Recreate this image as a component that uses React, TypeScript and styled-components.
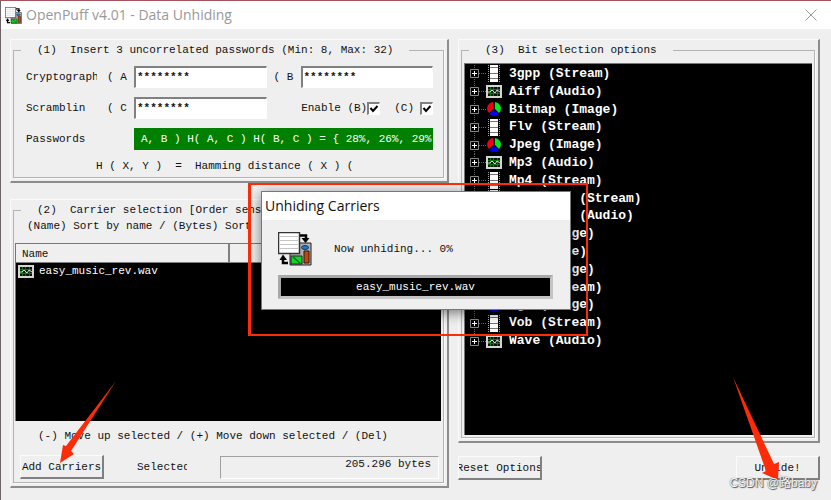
import React from "react";
import styled, { createGlobalStyle } from "styled-components";

const GlobalStyle = createGlobalStyle`
  *, *::before, *::after { box-sizing: border-box; }
  html, body, #root { height: 100%; }
  body {
    margin: 0;
    overflow: hidden;
    font: 11px/14px "Liberation Mono", monospace;
    color: #111;
    background: #efefef;
  }
  button, input { font: inherit; color: inherit; }
`;

const Window = styled.main`
  position: relative;
  display: flex;
  flex-direction: column;
  min-height: 100%;
  border-top: 1px solid #a8525f;
  border-left: 1px solid #6c6468;
  background: #efefef;
`;

const TitleBar = styled.header`
  display: flex;
  align-items: center;
  gap: 4px;
  height: 28px;
  padding: 0 14px 0 4px;
  background: #fff;
  color: #999;
`;

const Title = styled.h1`
  flex: 1;
  margin: 0;
  font: 400 14px/20px "Open Sans", sans-serif;
`;

const CloseButton = styled.button`
  display: flex;
  padding: 0;
  border: 0;
  background: none;
`;

const Body = styled.div`
  flex: 1;
  display: grid;
  grid-template-columns: 439fr 362fr;
  gap: 9px;
  padding: 10px 11px 12px 9px;
`;

const Column = styled.div`
  display: flex;
  flex-direction: column;
  gap: 16px;
  min-width: 0;
`;

const Panel = styled.section<{ $grow?: boolean }>`
  display: flex;
  flex-direction: column;
  flex: ${(p) => (p.$grow ? 1 : "none")};
  padding: 3px 3px 3px 2px;
  border: 1px solid #fafafa;
  border-right: 2px solid #8c8c8c;
  border-bottom: 2px solid #8c8c8c;
`;

const Group = styled.fieldset`
  flex: 1;
  display: flex;
  flex-direction: column;
  min-width: 0;
  margin: 0;
  padding: 0;
  border: 1px solid #b4b4b4;
  box-shadow: 1px 1px 0 #fafafa;
`;

const Legend = styled.legend`
  margin-left: 7px;
  padding: 0 16px;
  white-space: pre;
`;

const PasswordGrid = styled.div`
  display: grid;
  grid-template-columns: 71px 23px 132fr 20px 132fr;
  column-gap: 7px;
  row-gap: 9px;
  align-items: center;
  padding: 9px 10px 0 12px;
`;

const Clipped = styled.span`
  overflow: hidden;
  white-space: pre;
`;

const SlotLabel = styled.label<{ $indent?: boolean }>`
  padding-left: ${(p) => (p.$indent ? 3 : 0)}px;
  white-space: pre;
`;

const PasswordInput = styled.input`
  width: 100%;
  min-width: 0;
  height: 22px;
  padding: 0 1px 2px;
  border: 1px solid #fff;
  border-top: 2px solid #808080;
  border-left: 2px solid #808080;
  border-radius: 0;
  outline: 0;
  background: #fff;
  font-weight: 700;
`;

const EnableRow = styled.div`
  grid-column: 4 / -1;
  display: flex;
  justify-content: flex-end;
  gap: 14px;
`;

const CheckLabel = styled.label<{ $gap?: number }>`
  display: flex;
  align-items: center;
  gap: ${(p) => p.$gap || 0}px;
`;

const CheckBox = styled.input`
  appearance: none;
  width: 13px;
  height: 13px;
  margin: 0;
  border: 1px solid #fff;
  border-top: 2px solid #808080;
  border-left: 2px solid #808080;
  background: #fff;
  &:not(:checked) + svg { display: none; }
`;

const CheckWrap = styled.span`
  position: relative;
  display: flex;
  svg { position: absolute; inset: 0; pointer-events: none; }
`;

const Distance = styled.output`
  grid-column: 3 / -1;
  height: 22px;
  padding-left: 7px;
  overflow: hidden;
  white-space: pre;
  line-height: 22px;
  background: #008000;
  color: #fff;
`;

const Formula = styled.p`
  margin: 9px 0 4px 82px;
  white-space: pre;
`;

const SortHint = styled.p`
  margin: 2px 0 0 13px;
  overflow: hidden;
  white-space: pre;
`;

const CarrierBox = styled.div`
  flex: 1;
  margin: 10px 2px 0 1px;
  border-top: 1px solid #777;
  border-left: 1px solid #777;
  background: #000;
`;

const CarrierTable = styled.table`
  width: 100%;
  table-layout: fixed;
  border-collapse: collapse;
  color: #fff;
  th {
    height: 18px;
    padding: 2px 6px 0;
    border-right: 2px solid #808080;
    border-bottom: 1px solid #808080;
    background: #efefef;
    color: #111;
    font-weight: 400;
    text-align: left;
  }
  th:last-child { border-right: 0; text-align: right; }
  td { height: 18px; padding: 0 2px; }
`;

const FileName = styled.span`
  display: flex;
  align-items: center;
  gap: 5px;
`;

const MoveHint = styled.p`
  margin: 8px 0 0 24px;
  white-space: nowrap;
`;

const CarrierActions = styled.div`
  display: flex;
  align-items: center;
  margin: 12px 4px 3px 6px;
`;

const PushButton = styled.button`
  display: flex;
  align-items: center;
  justify-content: center;
  width: 84px;
  height: 24px;
  padding: 0;
  overflow: hidden;
  white-space: nowrap;
  border: 1px solid #fbfbfb;
  border-right: 2px solid #808080;
  border-bottom: 2px solid #808080;
  background: #efefef;
`;

const SelectedLabel = styled(Clipped)`
  width: 50px;
  margin: 0 33px;
`;

const ByteCount = styled.output`
  flex: 1;
  height: 23px;
  padding-right: 7px;
  border: 1px solid #fff;
  border-top-color: #a0a0a0;
  border-left-color: #a0a0a0;
  text-align: right;
`;

const TreeBox = styled.div`
  flex: 1;
  margin: 6px 2px 2px;
  border-top: 1px solid #777;
  border-left: 1px solid #777;
  background: #000;
`;

const Tree = styled.ul`
  display: grid;
  grid-template-rows: repeat(16, 1fr);
  height: 285px;
  margin: 1px 0 0;
  padding: 0 0 0 4px;
  list-style: none;
  color: #fff;
  font-size: 13px;
  font-weight: 700;
`;

const TreeRow = styled.li`
  display: flex;
  align-items: center;
  min-height: 0;
  white-space: pre;
`;

const Branch = styled.button`
  display: flex;
  padding: 0;
  border: 0;
  background: none;
`;

const Kind = styled.span`
  display: flex;
  width: 16px;
  margin-right: 7px;
`;

const Footer = styled.div`
  display: flex;
  justify-content: space-between;
  margin: -3px 0 8px;
`;

const Dialog = styled.div`
  position: absolute;
  top: 190px;
  left: calc(50% - 155px);
  width: 310px;
  border: 1px solid #777;
  background: #efefef;
  box-shadow: 0 3px 12px rgba(0, 0, 0, 0.5);
`;

const DialogTitle = styled.h2`
  margin: 0;
  padding: 4px 3px;
  background: #fff;
  color: #111;
  font: 400 14px/20px "Open Sans", sans-serif;
`;

const DialogStatus = styled.div`
  display: flex;
  align-items: center;
  gap: 22px;
  padding: 12px 16px 9px;
`;

const DialogFile = styled.div`
  margin: 0 17px 10px 16px;
  border: 3px solid #a8a8a8;
  border-right-color: #c4c4c4;
  border-bottom-color: #c4c4c4;
  padding: 2px;
  background: #000;
  color: #fff;
  text-align: center;
`;

const Highlight = styled.div`
  position: absolute;
  top: 182px;
  left: calc(50% - 168px);
  width: 340px;
  height: 153px;
  border: 2px solid #fc2b08;
  border-left-width: 3px;
  pointer-events: none;
`;

const Arrow = styled.svg<{ $x: string; $y: number }>`
  position: absolute;
  left: ${(p) => p.$x};
  top: ${(p) => p.$y}px;
  pointer-events: none;
`;

const Watermark = styled.span`
  position: absolute;
  right: 14px;
  bottom: 8px;
  color: #f8f8f8;
  font: 12px/17px "Liberation Sans", "Noto Sans CJK SC", sans-serif;
  text-shadow: 0 0 1px #444, 1px 1px 1px #555;
`;

const StreamIcon = () => (
  <svg width="16" height="17" viewBox="0 0 16 17">
    <path d="M2.5 0v17M13.5 0v17" stroke="#aaa" strokeDasharray="1 1" />
    <path d="M4 0h8v2H4zM4 3h8v5H4zM4 9h8v4H4zM4 14h8v3H4z" fill="#fff" />
    <path d="M4 2.500h8M4 8.500h8M4 13.500h8" stroke="#777" />
  </svg>
);

const AudioIcon = () => (
  <svg width="16" height="13" viewBox="0 0 16 13">
    <path d="M0 0h16v13H0z" fill="#d4d4d4" />
    <path d="M2 2h12v9H2z" fill="#001800" />
    <path d="M4.500 2v9M7.500 2v9M11.500 2v9M2 8.500h12M2 4.500h12" stroke="#087808" />
    <path d="M2 7h2l2-2 3 3 2-3 3 2" fill="none" stroke="#ddd" />
  </svg>
);

const ImageIcon = () => (
  <svg width="16" height="15" viewBox="0 0 16 15">
    <path d="M7 0v7L3 11Q1 9 1 6Q2 1 7 0" fill="#f00018" />
    <path d="M9 0v7l4 4q2-2 2-5Q14 1 9 0" fill="#00ec18" />
    <path d="M8 8l5 4q-5 4-10 0z" fill="#0000fa" />
  </svg>
);

const AppIcon = ({ size }: { size: number }) => (
  <svg width={size} height={size} viewBox="0 0 34 34">
    <path d="M21 11h12v22H12V21h9z" fill="#b0b0b0" stroke="#222" />
    <path d="M.5.5h21v21H.5z" fill="#fff" stroke="#333" strokeWidth="1.500" />
    <path d="M2 4.500h18M2 8.500h18M2 12.500h18M2 16.500h18" stroke="#c4c4c4" />
    <path d="M22 3.500h6v5" fill="none" stroke="#000" strokeWidth="2.500" />
    <path d="M23.500 6h8L27.500 11z" fill="#000" />
    <path d="M5 26v5h5" fill="none" stroke="#000" strokeWidth="2.500" />
    <path d="M1.500 28L5 22.500 9 28z" fill="#000" />
    <path d="M13 24h11v8H13z" fill="#10d820" stroke="#222" />
    <path d="M15 25l7 6" stroke="#063" strokeWidth="1.500" />
    <ellipse cx="27" cy="15.500" rx="3.500" ry="2" fill="#147fe0" stroke="#234" />
    <path d="M26 19h5v12h-5z" fill="#b84a14" stroke="#331400" />
  </svg>
);

const icons = { Stream: StreamIcon, Audio: AudioIcon, Image: ImageIcon, File: ImageIcon };

const formats: [string, keyof typeof icons][] = [
  ["3gpp", "Stream"],
  ["Aiff", "Audio"],
  ["Bitmap", "Image"],
  ["Flv", "Stream"],
  ["Jpeg", "Image"],
  ["Mp3", "Audio"],
  ["Mp4", "Stream"],
  ["Mpeg 1/2", "Stream"],
  ["Next/Sun", "Audio"],
  ["Pcx", "Image"],
  ["Pdf", "File"],
  ["Png", "Image"],
  ["Swf", "Stream"],
  ["Tga", "Image"],
  ["Vob", "Stream"],
  ["Wave", "Audio"],
];

const Check = ({ id }: { id: string }) => (
  <CheckWrap>
    <CheckBox id={id} type="checkbox" defaultChecked />
    <svg width="13" height="13" viewBox="0 0 13 13">
      <path d="M3.500 6l2.500 3 4.500-5" fill="none" stroke="#000" strokeWidth="2" />
    </svg>
  </CheckWrap>
);

const Expander = ({ name, last }: { name: string; last: boolean }) => (
  <Branch aria-label={"Expand " + name}>
    <svg width="17" height="17" viewBox="0 0 17 17">
      <path d={last ? "M5.500 0v4M10 8.500h7" : "M5.500 0v17M10 8.500h7"} stroke="#666" strokeDasharray="1 1" />
      <path d="M1.500 4.500h8v8h-8z" fill="#000" stroke="#888" />
      <path d="M3 8.500h5M5.500 6v5" stroke="#fff" />
    </svg>
  </Branch>
);

export default function App() {
  return (
    <>
      <GlobalStyle />
      <Window>
        <TitleBar>
          <AppIcon size={17} />
          <Title>OpenPuff v4.01 - Data Unhiding</Title>
          <CloseButton aria-label="Close">
            <svg width="12" height="12" viewBox="0 0 12 12">
              <path d="M.5.5l11 11M11.500.5l-11 11" stroke="#999" />
            </svg>
          </CloseButton>
        </TitleBar>
        <Body>
          <Column>
            <Panel>
              <Group>
                <Legend>{"(1)  Insert 3 uncorrelated passwords (Min: 8, Max: 32)"}</Legend>
                <PasswordGrid>
                  <Clipped>Cryptography</Clipped>
                  <SlotLabel htmlFor="a" $indent>( A</SlotLabel>
                  <PasswordInput id="a" defaultValue="********" />
                  <SlotLabel htmlFor="b">( B</SlotLabel>
                  <PasswordInput id="b" defaultValue="********" />
                  <Clipped>Scramblin</Clipped>
                  <SlotLabel htmlFor="c" $indent>( C</SlotLabel>
                  <PasswordInput id="c" defaultValue="********" />
                  <EnableRow>
                    <CheckLabel htmlFor="eb">Enable (B)<Check id="eb" /></CheckLabel>
                    <CheckLabel htmlFor="ec" $gap={6}>(C)<Check id="ec" /></CheckLabel>
                  </EnableRow>
                  <Clipped>Passwords</Clipped>
                  <Distance>{"A, B ) H( A, C ) H( B, C ) = { 28%, 26%, 29%"}</Distance>
                </PasswordGrid>
                <Formula>{"H ( X, Y )  =  Hamming distance ( X ) ("}</Formula>
              </Group>
            </Panel>
            <Panel $grow>
              <Group>
                <Legend>{"(2)  Carrier selection [Order sensitive]"}</Legend>
                <SortHint>{"(Name) Sort by name / (Bytes) Sort  by bytes"}</SortHint>
                <CarrierBox>
                  <CarrierTable>
                    <thead>
                      <tr><th>Name</th><th>Bytes</th></tr>
                    </thead>
                    <tbody>
                      <tr>
                        <td><FileName><AudioIcon />easy_music_rev.wav</FileName></td>
                        <td />
                      </tr>
                    </tbody>
                  </CarrierTable>
                </CarrierBox>
                <MoveHint>(-) Move up selected / (+) Move down selected / (Del)</MoveHint>
                <CarrierActions>
                  <PushButton>Add Carriers</PushButton>
                  <SelectedLabel>Selected</SelectedLabel>
                  <ByteCount>205.296 bytes</ByteCount>
                </CarrierActions>
              </Group>
            </Panel>
          </Column>
          <Column>
            <Panel $grow>
              <Group>
                <Legend>{"(3)  Bit selection options"}</Legend>
                <TreeBox>
                  <Tree>
                    {formats.map(([name, kind], i) => {
                      const Icon = icons[kind];
                      return (
                        <TreeRow key={name}>
                          <Expander name={name} last={i === formats.length - 1} />
                          <Kind><Icon /></Kind>
                          {`${name} (${kind})`}
                        </TreeRow>
                      );
                    })}
                  </Tree>
                </TreeBox>
              </Group>
            </Panel>
            <Footer>
              <PushButton>Reset Options</PushButton>
              <PushButton>Unhide!</PushButton>
            </Footer>
          </Column>
        </Body>
        <Dialog role="dialog" aria-labelledby="dialog-title">
          <DialogTitle id="dialog-title">Unhiding Carriers</DialogTitle>
          <DialogStatus><AppIcon size={34} />Now unhiding... 0%</DialogStatus>
          <DialogFile>easy_music_rev.wav</DialogFile>
        </Dialog>
        <Highlight />
        <Arrow $x="58px" $y={378} width="60" height="86" viewBox="0 0 60 86">
          <path d="M57 2L7 67 4 66 1 84 15 75 12 72z" fill="#fc2b08" />
        </Arrow>
        <Arrow $x="calc(100% - 99px)" $y={375} width="54" height="106" viewBox="0 0 54 106">
          <path d="M1 1L34 95 30 97 46 104 47 86 42 88z" fill="#fc2b08" />
        </Arrow>
        <Watermark>CSDN @路baby</Watermark>
      </Window>
    </>
  );
}
